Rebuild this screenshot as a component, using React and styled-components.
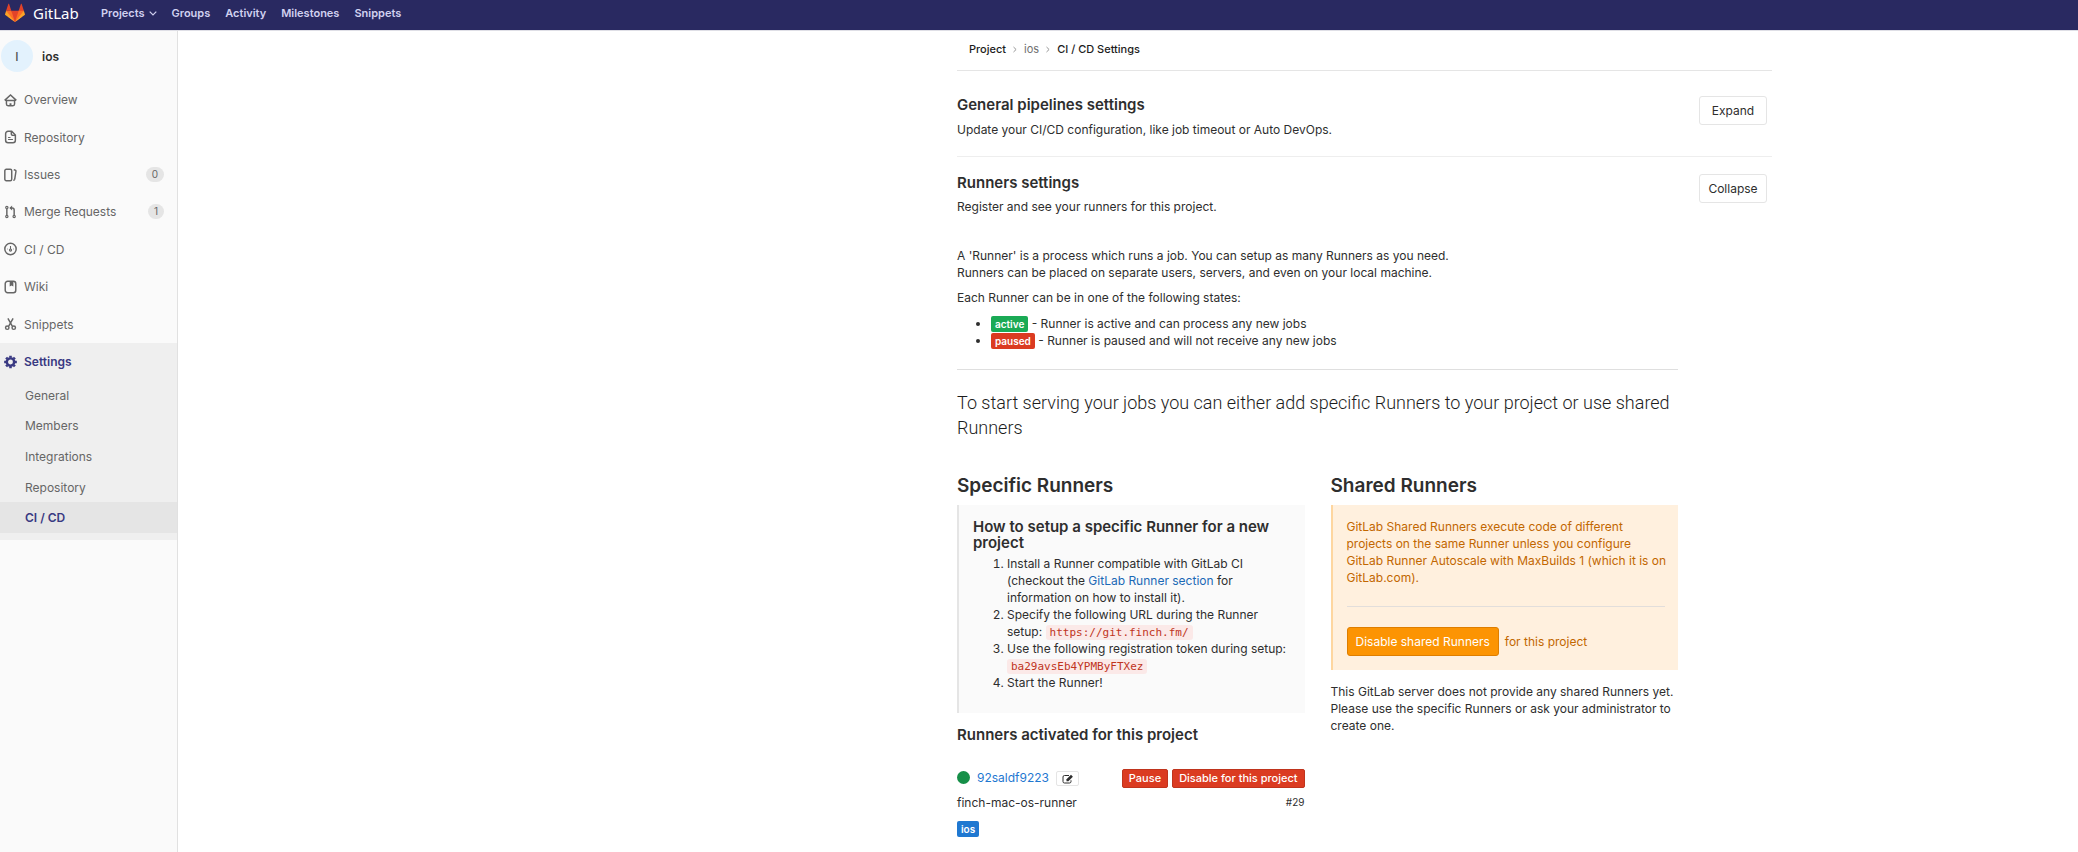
import React from "react";
import styled, { createGlobalStyle, css } from "styled-components";

const sans = `Inter, "Liberation Sans", sans-serif`;

const GlobalStyle = createGlobalStyle`
  *, *::before, *::after { box-sizing: border-box; }
  body {
    margin: 0;
    background: #fff;
    color: #2e2e2e;
    font: 12px/17px ${sans};
  }
  h1, h2, h3, h4, p, ul, ol { margin: 0; }
  a { text-decoration: none; color: #1b69b6; }
  button { font-family: ${sans}; cursor: pointer; }
`;

/* ---------- Top bar ---------- */

const TopBar = styled.header`
  display: flex;
  align-items: center;
  height: 31px;
  padding: 0 5px 4px;
  background: #292961;
  border-bottom: 1px solid #dfdfe6;
`;

const Brand = styled.a`
  display: flex;
  align-items: center;
  gap: 8px;
  width: 96px;
  color: #fff;
  font: 15px/20px "Noto Sans", sans-serif;
`;

const TopNav = styled.nav`
  display: flex;
  gap: 15px;
`;

const TopLink = styled.a`
  display: flex;
  align-items: center;
  gap: 4px;
  color: #d1d1f0;
  font-size: 11px;
  font-weight: 600;
`;

/* ---------- Sidebar ---------- */

const Shell = styled.div`
  display: flex;
  align-items: stretch;
  min-height: calc(100vh - 31px);
`;

const Sidebar = styled.aside`
  flex: 0 0 178px;
  background: #fafafa;
  border-right: 1px solid #e1e1e1;
`;

const ProjectLink = styled.a`
  display: flex;
  align-items: center;
  gap: 9px;
  height: 50px;
  padding-left: 1px;
  color: #2e2e2e;
  font-weight: 600;
`;

const Avatar = styled.span`
  display: grid;
  place-items: center;
  width: 32px;
  height: 32px;
  border-radius: 50%;
  background: #e3f2fd;
  color: #555;
  font-weight: 500;
`;

const MenuList = styled.ul`
  display: grid;
  grid-auto-rows: 1fr;
  min-height: ${(p) => p.$minHeight};
  padding: 0;
  list-style: none;
`;

const MenuLink = styled.a`
  display: flex;
  align-items: center;
  gap: 7px;
  height: 100%;
  padding: 0 13px 0 4px;
  color: ${(p) => (p.$active ? "#393982" : "#666")};
  font-weight: ${(p) => (p.$active ? 600 : 400)};
`;

const Badge = styled.span`
  margin-left: auto;
  padding: 0 6px;
  border-radius: 8px;
  background: #e5e5e5;
  font-size: 10px;
  line-height: 15px;
`;

const ActiveSection = styled.div`
  padding-bottom: 7px;
  background: #efefef;
`;

const ActiveHead = styled.div`
  height: 37px;
`;

const SubLink = styled(MenuLink)`
  padding-left: 25px;
  background: ${(p) => (p.$active ? "#e5e5e5" : "transparent")};
`;

/* ---------- Page ---------- */

const Main = styled.main`
  flex: 1;
  padding: 0 306px 14px 20px;
`;

const Content = styled.div`
  max-width: 815px;
  margin-left: auto;
`;

const Crumbs = styled.nav`
  display: flex;
  align-items: center;
  gap: 7px;
  height: 40px;
  padding: 0 12px 2px;
  border-bottom: 1px solid #e5e5e5;
  font-size: 11px;
`;

const Crumb = styled.a`
  color: ${(p) => (p.$muted ? "#707070" : "#1c1c1c")};
  font-weight: ${(p) => (p.$muted ? 400 : 500)};
`;

const SettingsHead = styled.section`
  display: flex;
  justify-content: space-between;
  align-items: flex-start;
  height: ${(p) => (p.$divided ? "86px" : "82px")};
  padding: ${(p) => (p.$divided ? "25px" : "17px")} 5px 0 0;
  border-bottom: ${(p) => (p.$divided ? "1px solid #eee" : "0")};
`;

const SectionTitle = styled.h4`
  font-size: 15px;
  line-height: 18px;
  font-weight: 600;
  margin-bottom: ${(p) => p.$gap || "0"};
`;

const OutlineButton = styled.button`
  width: 68px;
  height: 29px;
  padding: 0;
  border: 1px solid #e5e5e5;
  border-radius: 3px;
  background: #fff;
  color: #2e2e2e;
  font-size: 12px;
`;

const Body = styled.div`
  max-width: 721px;
`;

const Intro = styled.div`
  display: grid;
  gap: 8px;
  padding: 8px 0 20px;
`;

const States = styled.ul`
  padding-left: 34px;
  padding-top: 1px;
`;

const Label = styled.span`
  display: inline-block;
  padding: 1px 4px;
  border-radius: 2px;
  background: ${(p) => p.$color};
  color: #fff;
  font-size: 10px;
  line-height: 14px;
  font-weight: 600;
`;

const Rule = styled.hr`
  height: 1px;
  margin: ${(p) => p.$space || "0"} 0;
  border: 0;
  background: ${(p) => p.$color || "#dfdfdf"};
`;

const Lead = styled.h4`
  padding: 20px 0 34px;
  color: #1c1c1c;
  font: 300 18px/25px Roboto, ${sans};
`;

const Columns = styled.div`
  display: grid;
  grid-template-columns: minmax(0, 1fr) minmax(0, 1fr);
  gap: 26px;
  align-items: start;
`;

const ColumnTitle = styled.h3`
  margin-bottom: 7px;
  font-size: 19px;
  line-height: 24px;
  font-weight: 600;
`;

const Callout = styled.div`
  padding: 14px 13px 14px 14px;
  border-left: 2px solid #e5e5e5;
  background: #fafafa;
  ${(p) =>
    p.$warning &&
    css`
      padding-top: 13px;
      border-color: #fed69f;
      background: #fff0de;
      color: #c26700;
      white-space: nowrap;
    `}
`;

const CalloutTitle = styled.h4`
  margin-bottom: 4px;
  font-size: 15px;
  line-height: 16px;
  font-weight: 600;
`;

const Steps = styled.ol`
  padding: 0 0 8px 34px;
`;

const Code = styled.code`
  padding: 1px 4px;
  border-radius: 3px;
  background: #fbe9e8;
  color: #c0341d;
  font: 11px/14px "DejaVu Sans Mono", monospace;
`;

const ActionRow = styled.div`
  display: flex;
  align-items: center;
  gap: 6px;
`;

const WarningButton = styled.button`
  height: 29px;
  padding: 0 8px;
  border: 1px solid #de7e00;
  border-radius: 3px;
  background: #fc9403;
  color: #fff;
  font-size: 12px;
`;

const Note = styled.div`
  margin-top: 13px;
`;

const RunnerHead = styled.div`
  display: flex;
  align-items: flex-start;
  justify-content: space-between;
  margin: 25px 0 6px;
`;

const RunnerName = styled.div`
  display: flex;
  align-items: center;
  gap: 7px;
`;

const RunnerLink = styled.a`
  color: #1f78d1;
`;

const StatusDot = styled.span`
  width: 13px;
  height: 13px;
  border-radius: 50%;
  background: #168f48;
`;

const EditButton = styled.button`
  display: grid;
  place-items: center;
  align-self: flex-end;
  width: 23px;
  height: 15px;
  padding: 0;
  border: 1px solid #e5e5e5;
  border-radius: 2px;
  background: #fff;
  color: #2e2e2e;
`;

const RunnerActions = styled.div`
  display: flex;
  gap: 4px;
`;

const DangerButton = styled.button`
  height: 19px;
  padding: 0 6px;
  border: 1px solid #c0341d;
  border-radius: 2px;
  background: #db3b21;
  color: #fff;
  font-size: 11px;
  line-height: 17px;
  font-weight: 500;
`;

const RunnerInfo = styled.div`
  display: flex;
  justify-content: space-between;
  margin-bottom: 9px;
`;

const Small = styled.small`
  font-size: 10px;
`;

/* ---------- Icons ---------- */

const Tanuki = () => (
  <svg width="20" height="20" viewBox="0 0 36 36" aria-hidden="true">
    <path fill="#e24329" d="M2 14l9.38 9v-9l-4-12.28c-.205-.632-1.176-.632-1.38 0zM34 14l-9.38 9v-9l4-12.28c.205-.632 1.176-.632 1.38 0zM18 34.38L3 14h30z" />
    <path fill="#fc6d26" d="M18 34.38L11.38 14H2l4 11zM18 34.38L24.62 14H34l-4 11z" />
    <path fill="#fca326" d="M2 14L.1 20.16c-.18.565 0 1.2.5 1.56L18 34.38zM34 14l1.9 6.16c.18.565 0 1.2-.5 1.56L18 34.38z" />
  </svg>
);

const Chevron = ({ right }) => (
  <svg width={right ? 4 : 8} height={right ? 7 : 5} viewBox={right ? "0 0 4 7" : "0 0 8 5"} fill="none" stroke={right ? "#8a8a8a" : "currentColor"} strokeWidth={right ? 0.9 : 1.2} aria-hidden="true">
    <path d={right ? "M.5 1l2.6 2.5L.5 6" : "M.7.7L4 4 7.3.7"} />
  </svg>
);

const iconShapes = {
  home: (
    <>
      <path d="M.8 8.500L8 1.800l7.200 6.700M3 8v5a2 2 0 0 0 2 2h6a2 2 0 0 0 2-2V8M2 8.500h12" />
      <path d="M8 12v2.500" strokeWidth="2.400" />
    </>
  ),
  doc: (
    <>
      <path d="M9.500 1H5a3 3 0 0 0-3 3v8a3 3 0 0 0 3 3h6a3 3 0 0 0 3-3V5.500zM9 1v3a2 2 0 0 0 2 2h3" />
      <path strokeWidth="1.300" d="M5 8.500h3M5 11h6" />
    </>
  ),
  issues: (
    <>
      <rect x="1" y="1" width="8.500" height="14" rx="1.800" />
      <path d="M12 1.500l1.400.3a1.600 1.600 0 0 1 1.300 1.900l-1.500 9.500a1.600 1.600 0 0 1-1.700 1.300" />
    </>
  ),
  merge: (
    <g strokeWidth="1.500">
      <circle cx="3.500" cy="2.600" r="1.400" />
      <circle cx="3.500" cy="13.500" r="1.400" />
      <circle cx="12.500" cy="13.500" r="1.400" />
      <path strokeWidth="1.800" d="M3.500 4V12M12.500 12V5.500A2.500 2.500 0 0 0 10 3H8" />
      <path fill="currentColor" stroke="none" d="M10 0v6L6.500 3z" />
    </g>
  ),
  pipeline: (
    <>
      <circle cx="8" cy="8" r="7" />
      <path strokeWidth="1.300" d="M8 4.300V8M3.800 8h.7M11.500 8h.7" />
      <circle cx="8" cy="9.300" r="1.300" strokeWidth="1.400" />
    </>
  ),
  book: (
    <>
      <rect x="1.500" y="1" width="13" height="14" rx="3" />
      <path fill="currentColor" stroke="none" d="M7 1h4.500v6.500L9.250 6 7 7.500z" />
    </>
  ),
  snippet: (
    <g strokeWidth="1.800">
      <path d="M4.800 1l5.400 9.500M11.200 1L5.800 10.500" />
      <circle cx="4" cy="12.500" r="2.100" />
      <circle cx="12" cy="12.500" r="2.100" />
    </g>
  ),
  gear: (
    <g>
      <circle cx="8" cy="8" r="4.500" strokeWidth="3" />
      <path strokeWidth="3.200" d="M8 .2v2.500M8 13.300v2.500M.2 8h2.500M13.300 8h2.500M2.600 2.600l1.600 1.600M11.800 11.800l1.600 1.600M2.600 13.400l1.600-1.600M11.800 4.200l1.600-1.600" />
    </g>
  ),
};

const Icon = ({ name }) => (
  <svg width="13" height="14" viewBox="0 0 16 16" fill="none" stroke="currentColor" strokeWidth="1.8" aria-hidden="true">
    {iconShapes[name]}
  </svg>
);

const EditIcon = () => (
  <svg width="12" height="10" viewBox="0 0 12 10" fill="none" stroke="currentColor" aria-hidden="true">
    <path d="M7 1.500H2.500A1.500 1.500 0 0 0 1 3v4.500A1.500 1.500 0 0 0 2.500 9h5A1.500 1.500 0 0 0 9 7.500V6.300" />
    <path fill="currentColor" stroke="none" d="M4.500 7.200V5.300L9 .8l1.900 1.900-4.500 4.500z" />
  </svg>
);

/* ---------- Data ---------- */

const menu = [
  { icon: "home", text: "Overview" },
  { icon: "doc", text: "Repository" },
  { icon: "issues", text: "Issues", count: 0 },
  { icon: "merge", text: "Merge Requests", count: 1 },
  { icon: "pipeline", text: "CI / CD" },
  { icon: "book", text: "Wiki" },
  { icon: "snippet", text: "Snippets" },
];

const settingsMenu = ["General", "Members", "Integrations", "Repository", "CI / CD"];

export default function App() {
  return (
    <>
      <GlobalStyle />
      <TopBar>
        <Brand href="#">
          <Tanuki />
          GitLab
        </Brand>
        <TopNav>
          <TopLink href="#">
            Projects
            <Chevron />
          </TopLink>
          {["Groups", "Activity", "Milestones", "Snippets"].map((t) => (
            <TopLink href="#" key={t}>{t}</TopLink>
          ))}
        </TopNav>
      </TopBar>

      <Shell>
        <Sidebar>
          <ProjectLink href="#">
            <Avatar>I</Avatar>
            ios
          </ProjectLink>
          <MenuList $minHeight="262px">
            {menu.map((m) => (
              <li key={m.text}>
                <MenuLink href="#">
                  <Icon name={m.icon} />
                  {m.text}
                  {m.count !== undefined && <Badge>{m.count}</Badge>}
                </MenuLink>
              </li>
            ))}
          </MenuList>
          <ActiveSection>
            <ActiveHead>
              <MenuLink href="#" $active>
                <Icon name="gear" />
                Settings
              </MenuLink>
            </ActiveHead>
            <MenuList $minHeight="153px">
              {settingsMenu.map((t) => (
                <li key={t}>
                  <SubLink href="#" $active={t === "CI / CD"}>{t}</SubLink>
                </li>
              ))}
            </MenuList>
          </ActiveSection>
        </Sidebar>

        <Main>
          <Content>
            <Crumbs aria-label="Breadcrumb">
              <Crumb href="#">Project</Crumb>
              <Chevron right />
              <Crumb href="#" $muted>ios</Crumb>
              <Chevron right />
              <Crumb href="#">CI / CD Settings</Crumb>
            </Crumbs>

            <SettingsHead $divided>
              <div>
                <SectionTitle $gap="7px">General pipelines settings</SectionTitle>
                <p>Update your CI/CD configuration, like job timeout or Auto DevOps.</p>
              </div>
              <OutlineButton type="button">Expand</OutlineButton>
            </SettingsHead>

            <SettingsHead>
              <div>
                <SectionTitle $gap="6px">Runners settings</SectionTitle>
                <p>Register and see your runners for this project.</p>
              </div>
              <OutlineButton type="button">Collapse</OutlineButton>
            </SettingsHead>

            <Body>
              <Intro>
                <p>
                  A 'Runner' is a process which runs a job. You can setup as many Runners as you need.
                  <br />
                  Runners can be placed on separate users, servers, and even on your local machine.
                </p>
                <p>Each Runner can be in one of the following states:</p>
                <States>
                  <li><Label $color="#1aaa55">active</Label> - Runner is active and can process any new jobs</li>
                  <li><Label $color="#db3b21">paused</Label> - Runner is paused and will not receive any new jobs</li>
                </States>
              </Intro>
              <Rule />
              <Lead>To start serving your jobs you can either add specific Runners to your project or use shared Runners</Lead>

              <Columns>
                <section>
                  <ColumnTitle>Specific Runners</ColumnTitle>
                  <Callout>
                    <CalloutTitle>How to setup a specific Runner for a new project</CalloutTitle>
                    <Steps>
                      <li>
                        Install a Runner compatible with GitLab CI (checkout the <a href="#">GitLab Runner section</a> for information on how to install it).
                      </li>
                      <li>Specify the following URL during the Runner setup: <Code>https://git.finch.fm/</Code></li>
                      <li>Use the following registration token during setup: <Code>ba29avsEb4YPMByFTXez</Code></li>
                      <li>Start the Runner!</li>
                    </Steps>
                  </Callout>
                  <Note>
                    <SectionTitle>Runners activated for this project</SectionTitle>
                  </Note>
                  <RunnerHead>
                    <RunnerName>
                      <StatusDot />
                      <RunnerLink href="#">92saldf9223</RunnerLink>
                      <EditButton type="button" aria-label="Edit runner"><EditIcon /></EditButton>
                    </RunnerName>
                    <RunnerActions>
                      <DangerButton type="button">Pause</DangerButton>
                      <DangerButton type="button">Disable for this project</DangerButton>
                    </RunnerActions>
                  </RunnerHead>
                  <RunnerInfo>
                    <span>finch-mac-os-runner</span>
                    <Small>#29</Small>
                  </RunnerInfo>
                  <Label $color="#1f78d1">ios</Label>
                </section>

                <section>
                  <ColumnTitle>Shared Runners</ColumnTitle>
                  <Callout $warning>
                    <p>
                      GitLab Shared Runners execute code of different
                      <br />
                      projects on the same Runner unless you configure
                      <br />
                      GitLab Runner Autoscale with MaxBuilds 1 (which it is on
                      <br />
                      GitLab.com).
                    </p>
                    <Rule $space="20px" $color="#e2dedb" />
                    <ActionRow>
                      <WarningButton type="button">Disable shared Runners</WarningButton>
                      for this project
                    </ActionRow>
                  </Callout>
                  <Note>
                    <p>This GitLab server does not provide any shared Runners yet. Please use the specific Runners or ask your administrator to create one.</p>
                  </Note>
                </section>
              </Columns>
            </Body>
          </Content>
        </Main>
      </Shell>
    </>
  );
}
